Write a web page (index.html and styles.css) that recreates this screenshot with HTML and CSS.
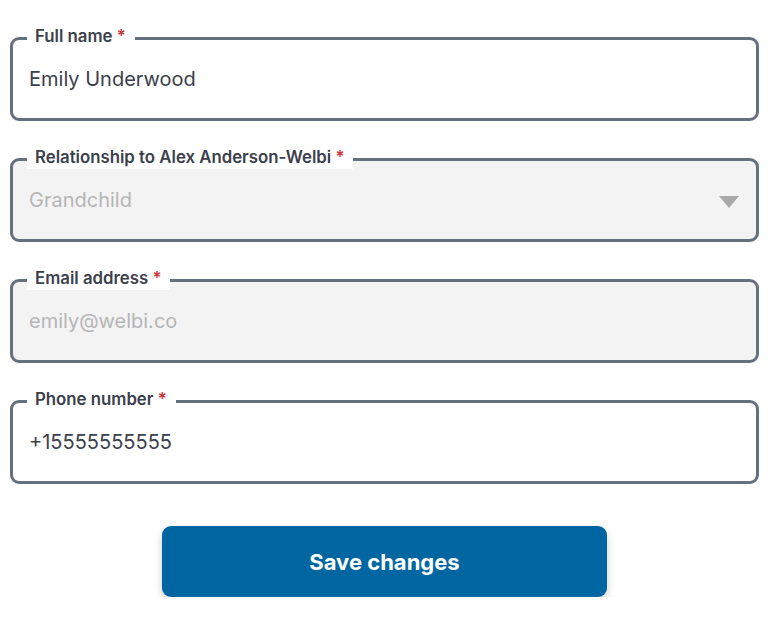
FILE: index.html
```html
<!DOCTYPE html>
<html lang="en">
<head>
<meta charset="utf-8">
<title>Edit contact</title>
<link rel="stylesheet" href="styles.css">
</head>
<body>
<form class="form">
  <div class="field">
    <label class="field-label">Full name <span class="req">*</span></label>
    <div class="field-box">
      <span class="field-value">Emily Underwood</span>
    </div>
  </div>
  <div class="field">
    <label class="field-label">Relationship to Alex Anderson-Welbi <span class="req">*</span></label>
    <div class="field-box disabled">
      <span class="field-value muted">Grandchild</span>
      <svg class="caret" width="20" height="12" viewBox="0 0 20 12"><path d="M0 0H20L10 12Z" fill="#a9a9a9"/></svg>
    </div>
  </div>
  <div class="field">
    <label class="field-label">Email address <span class="req">*</span></label>
    <div class="field-box disabled">
      <span class="field-value muted">emily@welbi.co</span>
    </div>
  </div>
  <div class="field">
    <label class="field-label">Phone number <span class="req">*</span></label>
    <div class="field-box">
      <span class="field-value">+15555555555</span>
    </div>
  </div>
  <div class="actions">
    <button type="button" class="btn">Save changes</button>
  </div>
</form>
</body>
</html>
```

FILE: styles.css
```css
* { box-sizing: border-box; }
html, body { margin: 0; padding: 0; background: #fff; }
body { font-family: Inter, "Open Sans", sans-serif; color: #3b404b; }
.form {
  display: flex;
  flex-direction: column;
  gap: 37px;
  padding: 37px 16px 0 10px;
}
.field { position: relative; }
.field-label {
  position: absolute;
  left: 17px;
  top: -11px;
  height: 22px;
  padding: 0 9px 0 8px;
  background: #fff;
  font-size: 16.8px;
  font-weight: 600;
  line-height: 20px;
  color: #3b404b;
}
.req { color: #c6343a; }
.field-box {
  height: 84px;
  border: 3px solid #667180;
  border-radius: 9px;
  display: flex;
  align-items: center;
  padding: 0 17px 0 16px;
  background: #fff;
}
.field-box.disabled { background: #f3f3f3; }
.field-value { font-size: 20px; color: #3b404b; flex: 1; padding-top: 0; }
.field-value.muted { color: #b6b6b6; }
.caret { flex: none; margin-top: 3px; }
.actions { display: flex; justify-content: center; padding-top: 5px; }
.btn {
  width: 445px;
  height: 71px;
  border: none;
  border-radius: 9px;
  background: #0066a1;
  color: #fff;
  font-family: Inter, sans-serif;
  font-size: 22px;
  font-weight: 700;
  box-shadow: 0 4px 8px rgba(0,0,0,0.2);
}
```
